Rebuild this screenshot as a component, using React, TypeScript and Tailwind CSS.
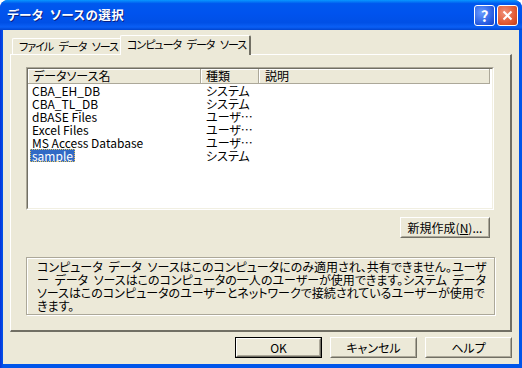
import React from "react";

const jp = { fontFamily: '"Noto Sans CJK JP", "Noto Sans", sans-serif' };

const rows = [
  { name: "CBA_EH_DB", kind: "システム" },
  { name: "CBA_TL_DB", kind: "システム" },
  { name: "dBASE Files", kind: "ユーザ…" },
  { name: "Excel Files", kind: "ユーザ…" },
  { name: "MS Access Database", kind: "ユーザ…" },
  { name: "sample", kind: "システム", selected: true },
];

const ClassicButton = ({
  children,
  width,
  isDefault,
}: {
  children: React.ReactNode;
  width: string;
  isDefault?: boolean;
}) => (
  <div className={`${width} h-[21px] ${isDefault ? "border border-black" : ""}`}>
    <div className="h-full w-full border border-t-white border-l-white border-b-[#716f64] border-r-[#716f64]">
      <div className="h-full w-full flex items-center justify-center text-[12px] leading-none text-black whitespace-nowrap border border-t-[#ece9d8] border-l-[#ece9d8] border-b-[#aca899] border-r-[#aca899]">
        {children}
      </div>
    </div>
  </div>
);

const App = () => {
  return (
    <div className="w-[522px] h-[368px] bg-white [font-feature-settings:'palt']" style={jp}>
      <div className="w-full h-full flex flex-col rounded-t-[8px] overflow-hidden bg-[linear-gradient(to_right,#0831d9,#0055ea_3px)]">
        {/* Title bar */}
        <div className="h-[30px] flex items-center px-[7px] bg-[linear-gradient(to_bottom,#0997ff_0%,#0058ee_12%,#0053ee_45%,#0050e6_75%,#0a5ff5_90%,#0045d0_100%)]">
          <span className="text-white font-bold text-[12.5px] [text-shadow:1px_1px_0_#0a1f82] tracking-[0.4px] [word-spacing:3px] whitespace-nowrap">
            データ ソースの選択
          </span>
          <div className="ml-auto flex gap-[2px] mr-[-3px]">
            <div className="w-[21px] h-[21px] rounded-[3px] border border-white flex items-center justify-center bg-[radial-gradient(circle_at_35%_35%,#6a9cff,#2459e0_70%,#1941c0)]">
              <span className="text-white font-bold text-[15px] leading-none">?</span>
            </div>
            <div className="w-[21px] h-[21px] rounded-[3px] border border-white flex items-center justify-center bg-[radial-gradient(circle_at_35%_35%,#f0917a,#e0562e_65%,#c0401c)]">
              <svg width="11" height="11" viewBox="0 0 11 11">
                <path d="M1.5 1.5 L9.5 9.5 M9.5 1.5 L1.5 9.5" stroke="white" strokeWidth="2" />
              </svg>
            </div>
          </div>
        </div>

        {/* Body */}
        <div className="flex-1 mx-[3px] mb-[4px] bg-[#ece9d8] flex flex-col">
          {/* Tabs */}
          <div className="h-[19px] mt-[5px] ml-[7px] flex items-end relative z-10">
            <div className="ml-[2px] w-[108px] h-[16px] border-t border-l border-white rounded-tl-[2px] flex items-center pl-[6px] text-[11px] leading-none tracking-[-1px] [word-spacing:4px] whitespace-nowrap text-black">
              <span>ファイル データ ソース</span>
            </div>
            <div className="w-[131px] h-[20px] mb-[-1px] bg-[#ece9d8] border-t border-l border-white border-r-2 border-r-[#716f64] rounded-t-[2px] flex items-center pb-[3px] pl-[6px] text-[11px] leading-none tracking-[-1px] [word-spacing:4px] whitespace-nowrap text-black">
              <span>コンピュータ データ ソース</span>
            </div>
          </div>

          {/* Panel */}
          <div className="ml-[7px] w-[502px] h-[278px] border-t border-l border-white border-r-2 border-b-2 border-r-[#716f64] border-b-[#716f64] flex flex-col">
            {/* List box */}
            <div className="ml-[15px] mt-[12px] w-[468px] h-[143px] border border-t-[#aca899] border-l-[#aca899] border-b-white border-r-white">
              <div className="w-full h-full border border-t-[#716f64] border-l-[#716f64] border-b-[#f1efe2] border-r-[#f1efe2] bg-white flex flex-col overflow-hidden">
                <div className="flex h-[15px] shrink-0 text-[12px] leading-none text-black">
                  <div className="w-[173px] h-full bg-[#ece9d8] border-r border-b border-r-[#aca899] border-b-[#aca899] shadow-[inset_1px_1px_0_#fff] pl-[5px] flex items-center">
                    データソース名
                  </div>
                  <div className="w-[58px] h-full bg-[#ece9d8] border-r border-b border-r-[#aca899] border-b-[#aca899] shadow-[inset_1px_1px_0_#fff] pl-[5px] flex items-center">
                    種類
                  </div>
                  <div className="w-[231px] h-full bg-[#ece9d8] border-r border-b border-r-[#aca899] border-b-[#aca899] shadow-[inset_1px_1px_0_#fff] pl-[6px] flex items-center">
                    説明
                  </div>
                </div>
                {rows.map((r) => (
                  <div key={r.name} className="flex h-[13px] shrink-0 text-[12px] leading-[13px] text-black">
                    <div className="w-[173px] pl-[2px]">
                      <span
                        className={`px-[2px] inline-block h-[13px] ${
                          r.selected ? "bg-[#316ac5] text-white outline outline-1 outline-dotted outline-[#e2c15a] -outline-offset-1" : ""
                        }`}
                      >
                        {r.name}
                      </span>
                    </div>
                    <div className="w-[58px] pl-[5px] whitespace-nowrap">{r.kind}</div>
                  </div>
                ))}
              </div>
            </div>

            {/* New button */}
            <div className="mt-[7px] ml-[389px]">
              <ClassicButton width="w-[90px]">
                <span>
                  新規作成(<span className="underline">N</span>)...
                </span>
              </ClassicButton>
            </div>

            {/* Info box */}
            <div className="ml-[15px] mt-[19px] w-[469px] h-[58px] border border-[#aca899] shadow-[inset_1px_1px_0_#fff,1px_1px_0_#fff] pl-[10px] pt-[2px] text-[12px] leading-[13px] [word-spacing:3px] text-black whitespace-nowrap">
              <div>コンピュータ データ ソースはこのコンピュータにのみ適用され、共有できません。ユーザ</div>
              <div>ー データ ソースはこのコンピュータの一人のユーザーが使用できます。システム データ</div>
              <div>ソースはこのコンピュータのユーザーとネットワークで接続されているユーザーが使用で</div>
              <div>きます。</div>
            </div>
          </div>

          {/* Bottom buttons */}
          <div className="mt-[5px] ml-[232px] flex gap-[8px]">
            <ClassicButton width="w-[87px]" isDefault>
              OK
            </ClassicButton>
            <ClassicButton width="w-[87px]">キャンセル</ClassicButton>
            <ClassicButton width="w-[87px]">ヘルプ</ClassicButton>
          </div>
        </div>
      </div>
    </div>
  );
};

export default App;
